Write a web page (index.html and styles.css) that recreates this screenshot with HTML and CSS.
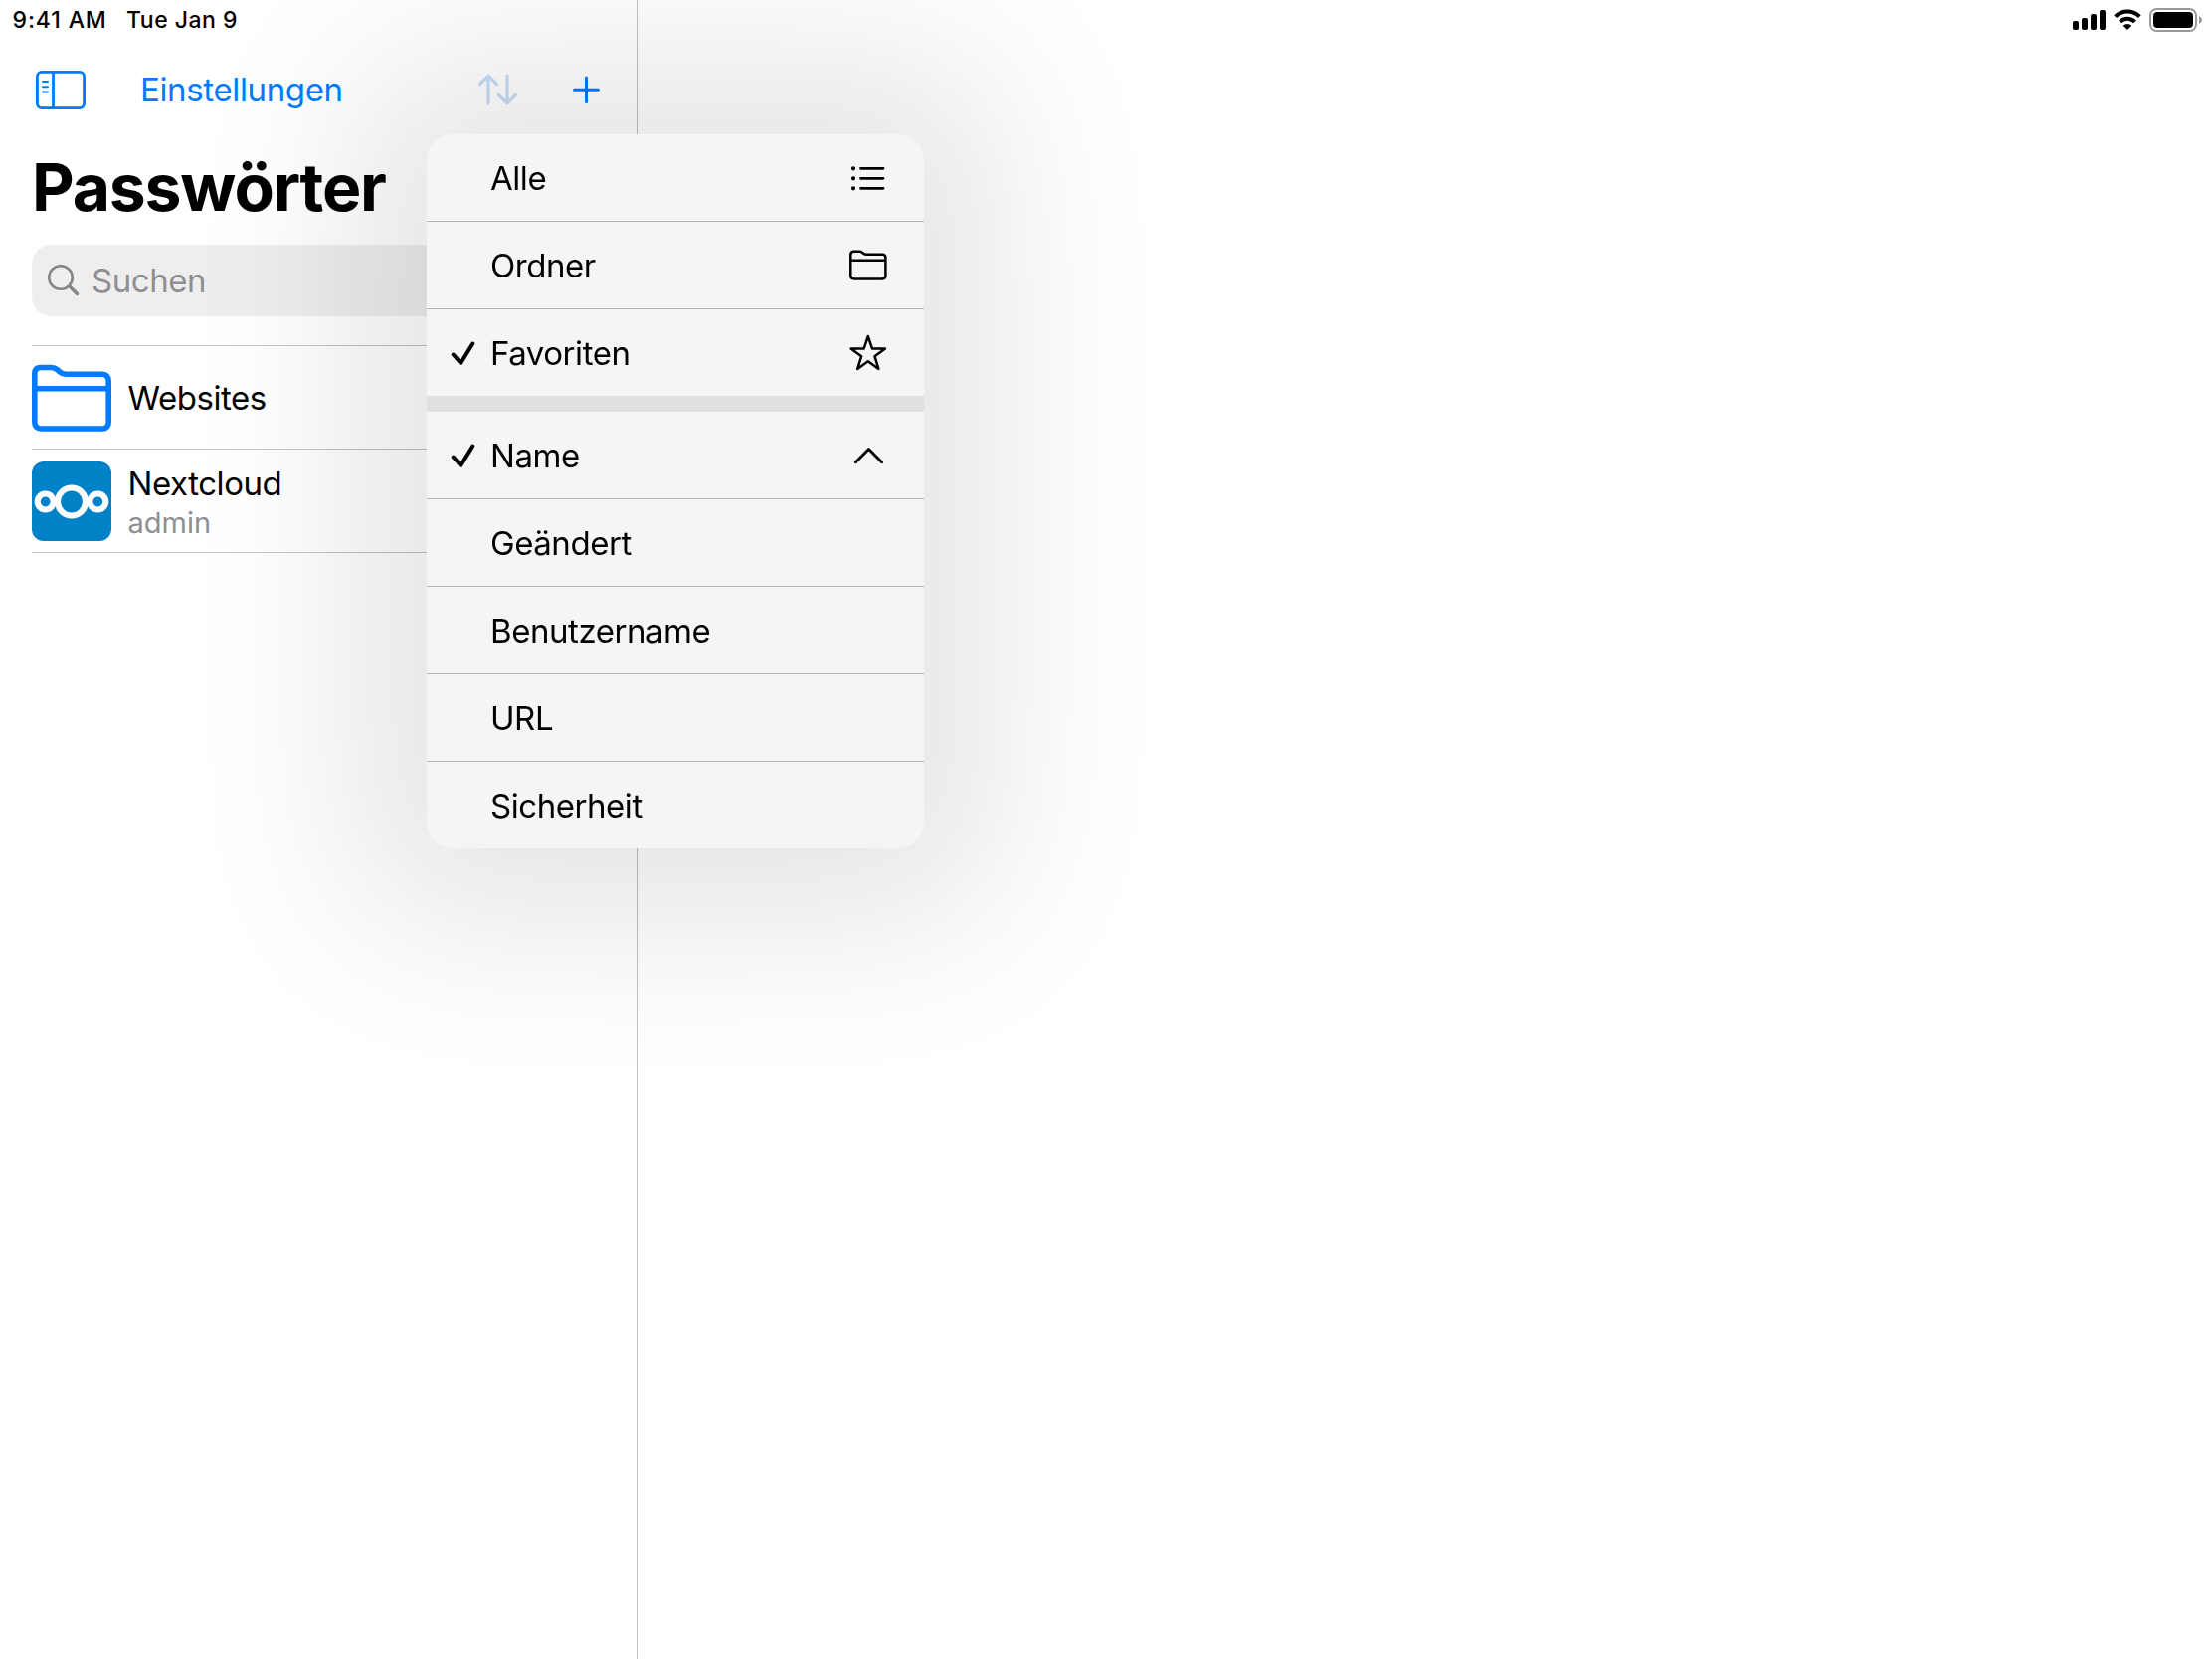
FILE: index.html
```
<!DOCTYPE html>
<html lang="de">
<head>
<meta charset="utf-8">
<title>Passwörter</title>
<link rel="stylesheet" href="styles.css">
</head>
<body>
<header class="status">
  <span class="status-time">9:41 AM</span>
  <span class="status-date">Tue Jan 9</span>
  <svg class="status-icons" width="134" height="28" viewBox="0 0 134 28">
    <g>
      <rect x="4" y="15" width="6" height="9" rx="2"/>
      <rect x="13" y="12" width="6" height="12" rx="2"/>
      <rect x="22" y="8" width="6" height="16" rx="2"/>
      <rect x="31" y="4" width="6" height="20" rx="2"/>
    </g>
    <g fill="none" stroke="#000" stroke-width="4">
      <path d="M46.700 10.7a17.3 17.3 0 0 1 24.6 0"/>
      <path d="M51.500 15.8a10.600 10.600 0 0 1 15 0"/>
    </g>
    <path d="M59 24l-4.300-4.300a6.100 6.100 0 0 1 8.600 0z"/>
    <rect x="82" y="3" width="46" height="22" rx="6.500" fill="none" stroke="#999" stroke-width="2"/>
    <rect x="85" y="6" width="40" height="16" rx="4"/>
    <path d="M131 10q3 1.500 3 4t-3 4z" fill="#999"/>
  </svg>
</header>
<div class="app">
  <aside class="sidebar">
    <nav class="toolbar">
      <svg class="icon-sidebar" width="52" height="40" viewBox="0 0 52 40" fill="none" stroke="#007aff" stroke-linecap="round">
        <rect x="1.400" y="2.400" width="47.200" height="36.200" rx="4.500" stroke-width="2.800"/>
        <path d="M17.500 3v35" stroke-width="2.800"/>
        <path d="M7 12h5M7 17.300h5M7 22.600h5" stroke-width="2"/>
      </svg>
      <a class="settings">Einstellungen</a>
      <svg class="icon-sort" width="40" height="32" viewBox="0 0 40 32" fill="none" stroke="#c6ddf7" stroke-width="3.200" stroke-linecap="round" stroke-linejoin="round">
        <path d="M11 30V2.500M2.500 10.500L11 2.100L19.500 10.500M30 2V29.500M21.500 21.500L30 29.900L38.500 21.500"/>
      </svg>
      <svg class="icon-add" width="28" height="28" viewBox="0 0 28 28" fill="none" stroke="#007aff" stroke-width="3" stroke-linecap="round">
        <path d="M14.500 2v24.500M2.500 14.300h24"/>
      </svg>
    </nav>
    <h1 class="title">Passwörter</h1>
    <div class="search">
      <svg width="32" height="32" viewBox="0 0 32 32" fill="none" stroke="#858589" stroke-linecap="round">
        <circle cx="13" cy="13" r="11.800" stroke-width="2.600"/>
        <path d="M22 22l7.500 7.500" stroke-width="3.400"/>
      </svg>
      <span>Suchen</span>
    </div>
    <ul class="list">
      <li class="entry">
        <svg class="entry-icon" width="80" height="80" viewBox="0 0 80 80" fill="none" stroke="#007aff" stroke-width="5.600" stroke-linejoin="round">
          <path d="M2.800 15.700Q2.800 9.500 9.300 9.500H19.500Q23 9.500 25.500 11.700L28 13.900Q30.500 16.200 34 16.200H70Q77.200 16.200 77.200 23.200V64.300Q77.200 71 70.500 71H9.500Q2.800 71 2.800 64.300ZM2.800 30.800H77.200"/>
        </svg>
        <div class="entry-text"><span class="name">Websites</span></div>
      </li>
      <li class="entry">
        <svg class="entry-icon" width="80" height="80" viewBox="0 0 80 80">
          <rect width="80" height="80" rx="12" fill="#0082c9"/>
          <g fill="none" stroke="#fff">
            <circle cx="40" cy="40.500" r="14" stroke-width="6.200"/>
            <circle cx="13.700" cy="40.500" r="8" stroke-width="6.200"/>
            <circle cx="66.300" cy="40.500" r="8" stroke-width="6.200"/>
          </g>
        </svg>
        <div class="entry-text"><span class="name">Nextcloud</span><span class="user">admin</span></div>
      </li>
    </ul>
  </aside>
  <main class="detail"></main>
</div>
<div class="menu">
  <div class="group">
    <div class="item"><span class="check"></span><span class="label">Alle</span>
      <svg width="40" height="40" viewBox="0 0 40 40" fill="none" stroke="#000" stroke-width="2.800" stroke-linecap="round">
        <path d="M12.500 10.300H35M12.500 20.300H35M12.500 30.300H35"/>
        <path d="M5 10.300h.01M5 20.300h.01M5 30.300h.01" stroke-width="4.200"/>
      </svg></div>
    <div class="item"><span class="check"></span><span class="label">Ordner</span>
      <svg width="40" height="40" viewBox="0 0 40 40" fill="none" stroke="#000" stroke-width="2.500" stroke-linejoin="round">
        <path d="M2.300 9Q2.300 5.700 5.600 5.700H11Q12.800 5.700 14 6.800L15.200 7.800Q16.500 8.800 18.200 8.800H34.200Q37.400 8.800 37.400 12.100V30Q37.400 33.400 34 33.400H5.700Q2.300 33.400 2.300 30ZM2.300 14.800H37.400"/>
      </svg></div>
    <div class="item"><span class="check"><svg width="26" height="26" viewBox="0 0 26 26" fill="none" stroke="#000" stroke-width="4" stroke-linecap="round" stroke-linejoin="round"><path d="M2.800 14.500L10.300 23L22.300 3.500"/></svg></span><span class="label">Favoriten</span>
      <svg width="40" height="40" viewBox="0 0 40 40" fill="none" stroke="#000" stroke-width="2.500" stroke-linejoin="round">
        <path d="M19.800 3L23.900 15.400H37L26.500 23.300L30.400 35.900L19.800 28.200L9.200 35.900L13.100 23.300L2.600 15.400H15.700Z"/>
      </svg></div>
  </div>
  <div class="group">
    <div class="item"><span class="check"><svg width="26" height="26" viewBox="0 0 26 26" fill="none" stroke="#000" stroke-width="4" stroke-linecap="round" stroke-linejoin="round"><path d="M2.800 14.500L10.300 23L22.300 3.500"/></svg></span><span class="label">Name</span>
      <svg width="40" height="40" viewBox="0 0 40 40" fill="none" stroke="#000" stroke-width="2.800" stroke-linecap="round" stroke-linejoin="round">
        <path d="M7.300 26.800L20.500 13.400L33.700 26.800"/>
      </svg></div>
    <div class="item"><span class="check"></span><span class="label">Geändert</span></div>
    <div class="item"><span class="check"></span><span class="label">Benutzername</span></div>
    <div class="item"><span class="check"></span><span class="label">URL</span></div>
    <div class="item"><span class="check"></span><span class="label">Sicherheit</span></div>
  </div>
</div>
</body>
</html>
```
FILE: styles.css
```
* { box-sizing: border-box; }
body {
  margin: 0;
  height: 1668px;
  position: relative;
  overflow: hidden;
  background: #fff;
  color: #000;
  font-family: Inter, "Liberation Sans", sans-serif;
  font-size: 33px;
  letter-spacing: -.45px;
}
svg { display: block; flex: none; }
.app { display: flex; height: 1668px; }
.sidebar { width: 641px; border-right: 1px solid #c0c0c2; padding: 40px 0 0 32px; }
.detail { flex: 1; }

.status {
  position: absolute;
  inset: 0 0 auto;
  height: 40px;
  padding: 0 10px 0 12.5px;
  display: flex;
  align-items: center;
  font-size: 23px;
  font-weight: 500;
  white-space: nowrap;
}
.status-time { width: 114.5px; letter-spacing: .9px; }
.status-date { letter-spacing: .5px; }
.status-icons { margin-left: auto; }

.toolbar { height: 100px; display: flex; align-items: center; padding-left: 4px; }
.settings { margin-left: 53px; width: 339px; color: #007aff; letter-spacing: -.36px; }
.icon-add { margin-left: 55px; }

.title { margin: 10px 0 0; height: 76px; line-height: 76px; font-size: 66px; font-weight: 700; letter-spacing: -1.2px; }

.search {
  margin-top: 20px;
  height: 72px;
  border-radius: 20px;
  padding-left: 16px;
  display: flex;
  align-items: center;
  gap: 12px;
  background: #eee;
  color: #8e8e93;
}

.list { list-style: none; margin: 29px 0 0; padding: 0; border-top: 1px solid #c0c0c2; }
.entry { height: 104px; border-bottom: 1px solid #c0c0c2; display: flex; align-items: center; gap: 16.5px; }
.entry-text { display: flex; flex-direction: column; }
.name { line-height: 42px; }
.user { line-height: 38px; margin-bottom: -2px; font-size: 29px; color: #8e8e93; letter-spacing: 0; }

.menu {
  position: absolute;
  left: 429px;
  top: 135px;
  width: 500px;
  isolation: isolate;
}
.menu::before {
  content: "";
  position: absolute;
  inset: -70px;
  z-index: -1;
  border-radius: 70px;
  background: #0e0e04;
  opacity: .112;
  filter: blur(88px);
  will-change: transform;
}
.group { background: #f5f5f5; border-radius: 26px 26px 0 0; }
.group + .group { border-top: 16px solid #e0e0e0; border-radius: 0 0 26px 26px; }
.item { height: 87px; display: flex; align-items: center; padding: 0 36px 0 24px; }
.item + .item { height: 88px; border-top: 1px solid #b4b4b4; }
.check { width: 40px; }
.label { flex: 1; }
```
